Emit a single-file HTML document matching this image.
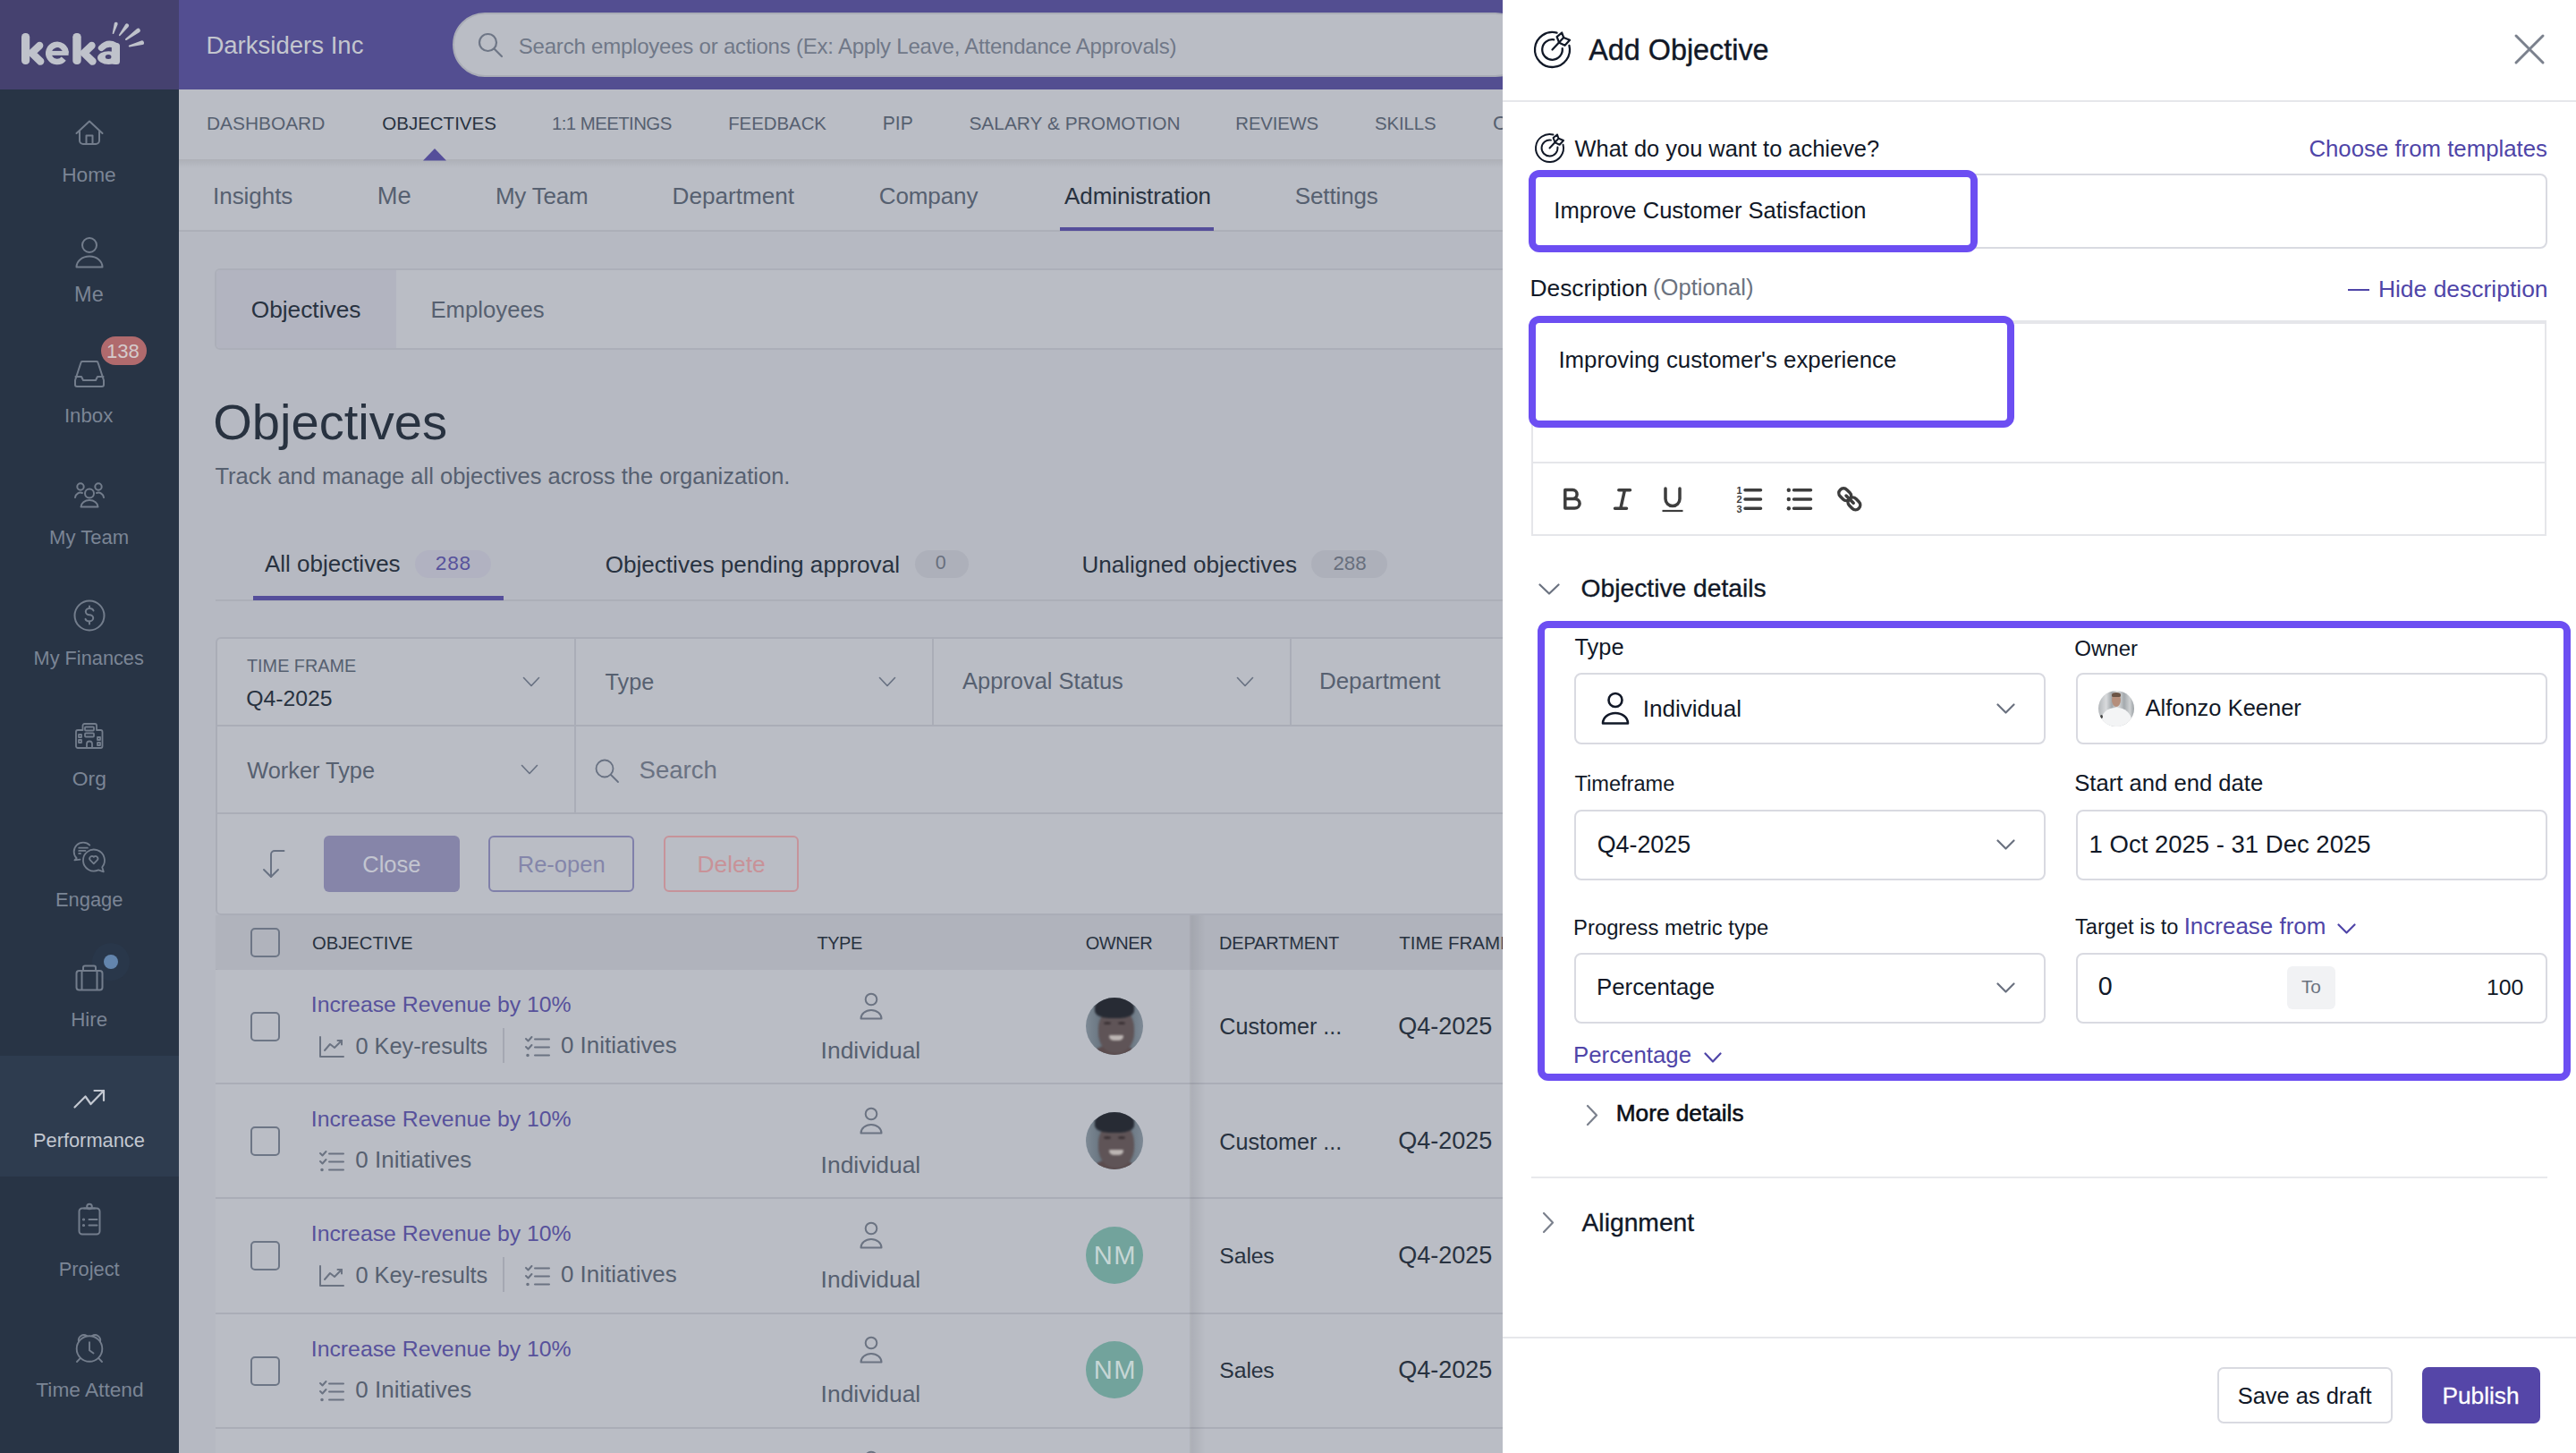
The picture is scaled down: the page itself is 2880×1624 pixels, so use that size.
<!DOCTYPE html>
<html><head><meta charset="utf-8"><title>Add Objective</title>
<style>
html,body{margin:0;padding:0;width:2880px;height:1624px;overflow:hidden;background:#b6b9c2;}
body{position:relative;font-family:'Liberation Sans', sans-serif;}
.a{position:absolute;box-sizing:border-box;}
.t{white-space:pre;}
@media (max-width:2000px){html{zoom:0.5;}}
</style></head><body>
<div class="a" style="left:0.0px;top:0.0px;width:200.0px;height:1624.0px;background:#283445"></div>
<div class="a" style="left:0.0px;top:0.0px;width:200.0px;height:100.0px;background:#45416f"></div>
<div class="a" style="left:200.0px;top:0.0px;width:1480.0px;height:100.0px;background:#534e91"></div>
<div class="a" style="left:200.0px;top:100.0px;width:1480.0px;height:78.0px;background:#babdc5"></div>
<div class="a" style="left:200.0px;top:178.0px;width:1480.0px;height:80.0px;background:#babdc5;"></div>
<div class="a" style="left:200.0px;top:178.0px;width:1480.0px;height:10.0px;background:linear-gradient(rgba(0,0,0,0.07),rgba(0,0,0,0))"></div>
<div class="a" style="left:200.0px;top:257.0px;width:1480.0px;height:2.0px;background:#acafb8"></div>
<svg class="a" style="left:0.0px;top:0.0px;" width="200.0" height="100.0" viewBox="0 0 200 100" fill="none"><g fill="#bfc2cb"><path d="M127.27 37.43 L131.61 27.18 A2.00 2.00 0 0 0 127.79 26.02 L125.73 36.97 A0.80 0.80 0 0 0 127.27 37.43 Z"/><path d="M134.52 39.75 L143.65 29.94 A2.20 2.20 0 0 0 140.15 27.26 L133.08 38.65 A0.90 0.90 0 0 0 134.52 39.75 Z"/><path d="M141.49 44.90 L156.02 35.93 A2.40 2.40 0 0 0 153.18 32.07 L140.31 43.30 A1.00 1.00 0 0 0 141.49 44.90 Z"/><path d="M145.06 52.47 L159.22 50.12 A2.40 2.40 0 0 0 157.98 45.48 L144.54 50.53 A1.00 1.00 0 0 0 145.06 52.47 Z"/>
<rect x="24" y="36.9" width="9.2" height="35.2" rx="4.3"/>
<rect x="81.3" y="36.9" width="9.4" height="35.2" rx="4.3"/>
<rect x="124.8" y="48" width="9.2" height="24.1" rx="3.5"/><path fill-rule="evenodd" d="M109 64.6 a12.5 7.4 0 1 0 25 0 a12.5 7.4 0 1 0 -25 0 Z M117.75 63.4 a3.4 2.5 0 1 0 6.8 0 a3.4 2.5 0 1 0 -6.8 0 Z"/>
</g>
<g stroke="#bfc2cb" fill="none" stroke-linecap="round" stroke-linejoin="round">
<path d="M44.2 51 L35.5 59.3 L45.2 68.6" stroke-width="8.4"/>
<path d="M102.5 51 L93.8 59.3 L103.5 68.6" stroke-width="8.4"/>
<path d="M71.25 65.6 A9.6 9.6 0 1 1 73.5 59.45" stroke-width="6.6" stroke-linecap="butt"/>
<path d="M55.5 59.4 H76.6" stroke-width="5" stroke-linecap="butt"/>
<path d="M113.3 53.6 Q120.5 46.2 129 51" stroke-width="7"/>

</g></svg>
<div class="a t" style="left:230.40px;top:36.68px;font-size:27.55px;line-height:27.55px;letter-spacing:0.000px;color:#c3c6ce;font-weight:400;">Darksiders Inc</div>
<div class="a" style="left:506.0px;top:14.0px;width:1202.0px;height:72.0px;background:#babdc5;border:2px solid #a9acb6;border-radius:36px"></div>
<svg class="a" style="left:533.0px;top:35.0px;" width="32.0" height="32.0" viewBox="0 0 32 32" fill="none"><circle cx="12.5" cy="12.5" r="9.5" stroke="#6e7686" stroke-width="2.2"/><path d="M19.5 19.5 L28 28" stroke="#6e7686" stroke-width="2.2" stroke-linecap="round"/></svg>
<div class="a t" style="left:579.80px;top:39.68px;font-size:24.00px;line-height:24.00px;letter-spacing:-0.214px;color:#707888;font-weight:400;">Search employees or actions (Ex: Apply Leave, Attendance Approvals)</div>
<div class="a t" style="left:230.93px;top:127.61px;font-size:20.90px;line-height:20.90px;letter-spacing:0.000px;color:#566070;font-weight:400;">DASHBOARD</div>
<div class="a t" style="left:427.27px;top:127.94px;font-size:20.51px;line-height:20.51px;letter-spacing:0.000px;color:#283240;font-weight:400;">OBJECTIVES</div>
<div class="a t" style="left:616.97px;top:128.03px;font-size:20.40px;line-height:20.40px;letter-spacing:-0.564px;color:#566070;font-weight:400;">1:1 MEETINGS</div>
<div class="a t" style="left:814.17px;top:128.03px;font-size:20.40px;line-height:20.40px;letter-spacing:-0.017px;color:#566070;font-weight:400;">FEEDBACK</div>
<div class="a t" style="left:986.71px;top:127.40px;font-size:21.15px;line-height:21.15px;letter-spacing:0.000px;color:#566070;font-weight:400;">PIP</div>
<div class="a t" style="left:1083.45px;top:127.60px;font-size:20.90px;line-height:20.90px;letter-spacing:0.000px;color:#566070;font-weight:400;">SALARY &amp; PROMOTION</div>
<div class="a t" style="left:1381.37px;top:128.03px;font-size:20.40px;line-height:20.40px;letter-spacing:-0.199px;color:#566070;font-weight:400;">REVIEWS</div>
<div class="a t" style="left:1536.98px;top:128.03px;font-size:20.40px;line-height:20.40px;letter-spacing:-0.124px;color:#566070;font-weight:400;">SKILLS</div>
<div class="a t" style="left:1668.89px;top:126.53px;font-size:22.17px;line-height:22.17px;letter-spacing:0.000px;color:#566070;font-weight:400;">C</div>
<svg class="a" style="left:472.0px;top:165.0px;" width="28.0" height="15.0" viewBox="0 0 28 15" fill="none"><path d="M14 1 L27 14.5 L1 14.5 Z" fill="#554e9a"/></svg>
<div class="a t" style="left:238.06px;top:206.29px;font-size:26.00px;line-height:26.00px;letter-spacing:-0.046px;color:#566070;font-weight:400;">Insights</div>
<div class="a t" style="left:421.82px;top:205.19px;font-size:27.30px;line-height:27.30px;letter-spacing:0.000px;color:#566070;font-weight:400;">Me</div>
<div class="a t" style="left:553.92px;top:206.29px;font-size:26.00px;line-height:26.00px;letter-spacing:-0.207px;color:#566070;font-weight:400;">My Team</div>
<div class="a t" style="left:751.61px;top:206.20px;font-size:26.11px;line-height:26.11px;letter-spacing:0.000px;color:#566070;font-weight:400;">Department</div>
<div class="a t" style="left:982.70px;top:206.29px;font-size:26.00px;line-height:26.00px;letter-spacing:-0.080px;color:#566070;font-weight:400;">Company</div>
<div class="a t" style="left:1190.00px;top:206.29px;font-size:26.00px;line-height:26.00px;letter-spacing:-0.055px;color:#283240;font-weight:400;">Administration</div>
<div class="a t" style="left:1447.70px;top:206.29px;font-size:26.00px;line-height:26.00px;letter-spacing:-0.111px;color:#566070;font-weight:400;">Settings</div>
<div class="a" style="left:1185.0px;top:254.0px;width:172.0px;height:4.0px;background:#554e9a"></div>
<div class="a" style="left:0.0px;top:1180.0px;width:200.0px;height:135.0px;background:#2e3c4f"></div>
<div class="a t" style="left:69.19px;top:184.30px;font-size:22.68px;line-height:22.68px;letter-spacing:0.000px;color:#7b8595;font-weight:400;">Home</div>
<div class="a t" style="left:83.12px;top:318.43px;font-size:23.48px;line-height:23.48px;letter-spacing:0.017px;color:#7b8595;font-weight:400;">Me</div>
<div class="a t" style="left:71.90px;top:454.15px;font-size:22.26px;line-height:22.26px;letter-spacing:-0.000px;color:#7b8595;font-weight:400;">Inbox</div>
<div class="a t" style="left:55.04px;top:589.73px;font-size:22.06px;line-height:22.06px;letter-spacing:0.000px;color:#7b8595;font-weight:400;">My Team</div>
<div class="a t" style="left:37.56px;top:725.09px;font-size:21.75px;line-height:21.75px;letter-spacing:0.000px;color:#7b8595;font-weight:400;">My Finances</div>
<div class="a t" style="left:80.86px;top:859.07px;font-size:22.84px;line-height:22.84px;letter-spacing:0.000px;color:#7b8595;font-weight:400;">Org</div>
<div class="a t" style="left:61.95px;top:994.96px;font-size:21.90px;line-height:21.90px;letter-spacing:0.000px;color:#7b8595;font-weight:400;">Engage</div>
<div class="a t" style="left:79.22px;top:1129.14px;font-size:22.28px;line-height:22.28px;letter-spacing:0.000px;color:#7b8595;font-weight:400;">Hire</div>
<div class="a t" style="left:36.95px;top:1264.31px;font-size:21.84px;line-height:21.84px;letter-spacing:0.000px;color:#c3c8d1;font-weight:400;">Performance</div>
<div class="a t" style="left:65.65px;top:1407.51px;font-size:21.85px;line-height:21.85px;letter-spacing:0.000px;color:#7b8595;font-weight:400;">Project</div>
<div class="a t" style="left:40.35px;top:1542.30px;font-size:22.69px;line-height:22.69px;letter-spacing:-0.000px;color:#7b8595;font-weight:400;">Time Attend</div>
<div class="a" style="left:103px;top:1054px;width:42px;height:42px;border-radius:50%;background:#29374a"></div>
<svg class="a" style="left:80.0px;top:128.5px;" width="40.0" height="40.0" viewBox="0 0 40 40" fill="none"><g stroke="#737d8c" stroke-width="2" stroke-linecap="round" stroke-linejoin="round"><path d="M5.5 20 L20 6.5 L34.5 20"/><path d="M9 17 V28 a4 4 0 0 0 4 4 H27 a4 4 0 0 0 4 -4 V17"/><path d="M16.5 32 V22.5 H23.5 V32"/></g></svg>
<svg class="a" style="left:80.0px;top:263.3px;" width="40.0" height="40.0" viewBox="0 0 40 40" fill="none"><g stroke="#737d8c" stroke-width="2" stroke-linecap="round" stroke-linejoin="round"><circle cx="20" cy="11" r="8"/><path d="M5.5 35.5 a14.5 12 0 0 1 29 0 Z"/></g></svg>
<svg class="a" style="left:80.0px;top:398.0px;" width="40.0" height="40.0" viewBox="0 0 40 40" fill="none"><g stroke="#737d8c" stroke-width="2" stroke-linecap="round" stroke-linejoin="round"><path d="M12 6 H28 a1.5 1.5 0 0 1 1.5 1.2 L36 27 V32 a2 2 0 0 1 -2 2 H6 a2 2 0 0 1 -2 -2 V27 L10.5 7.2 A1.5 1.5 0 0 1 12 6 Z"/><path d="M4.5 23 H11 L13 27 H27 L29 23 H35.5"/></g></svg>
<svg class="a" style="left:80.0px;top:532.5px;" width="40.0" height="40.0" viewBox="0 0 40 40" fill="none"><g stroke="#737d8c" stroke-width="2" stroke-linecap="round" stroke-linejoin="round"><circle cx="20" cy="18.5" r="5"/><circle cx="10" cy="11" r="3.7"/><circle cx="30" cy="11" r="3.7"/><path d="M10.5 33.5 a9.5 7.5 0 0 1 19 0 Z"/><path d="M4 23 a6 6 0 0 1 8 -5"/><path d="M36 23 a6 6 0 0 0 -8 -5"/></g></svg>
<svg class="a" style="left:80.0px;top:667.9px;" width="40.0" height="40.0" viewBox="0 0 40 40" fill="none"><g stroke="#737d8c" stroke-width="2" stroke-linecap="round" stroke-linejoin="round"><circle cx="20" cy="20" r="16.5"/><path d="M24.5 14.5 a4.5 3.5 0 0 0 -4.5 -2.5 a4.2 3.6 0 0 0 0 7.2 a4.2 3.6 0 0 1 0 7.2 a4.5 3.5 0 0 1 -4.5 -2.5"/><path d="M20 9.5 V12 M20 26.5 V29.5"/></g></svg>
<svg class="a" style="left:80.0px;top:803.0px;" width="40.0" height="40.0" viewBox="0 0 40 40" fill="none"><g stroke="#737d8c" stroke-width="1.8" stroke-linecap="round" stroke-linejoin="round"><path d="M12.5 13 V8 a2 2 0 0 1 2 -2 H26 a2 2 0 0 1 2 2 V13 H32.5 a2 2 0 0 1 2 2 V31 a2 2 0 0 1 -2 2 H7 a2 2 0 0 1 -2 -2 V15 a2 2 0 0 1 2 -2 Z"/><rect x="15" y="9.5" width="10" height="4" rx="1"/><rect x="15" y="16.5" width="10" height="4" rx="1"/><rect x="8" y="18" width="3" height="3"/><rect x="8" y="24" width="3" height="3"/><rect x="29" y="21" width="3" height="3"/><rect x="29" y="27" width="3" height="3"/><path d="M17 33 V28.5 a3 3 0 0 1 6 0 V33"/></g></svg>
<svg class="a" style="left:80.0px;top:937.8px;" width="40.0" height="40.0" viewBox="0 0 40 40" fill="none"><g stroke="#737d8c" stroke-width="1.8" stroke-linecap="round" stroke-linejoin="round"><path d="M20.3 6.6 A10.3 10.3 0 1 0 5.7 21.2 L3.4 23.4 L9.5 22.6"/><path d="M8.2 9.7 H17.9 M8.2 12.9 H15.5 M8.2 15.9 H10"/><path d="M30.1 34.4 A12 12 0 1 1 34.2 31.2 L35.8 36.3 Z"/><path d="M24.8 27.3 L20.9 23.4 a2.6 2.6 0 0 1 3.9 -3.5 a2.6 2.6 0 0 1 3.9 3.5 Z"/></g></svg>
<svg class="a" style="left:80.0px;top:1073.0px;" width="40.0" height="40.0" viewBox="0 0 40 40" fill="none"><g stroke="#737d8c" stroke-width="2" stroke-linecap="round" stroke-linejoin="round"><rect x="5.5" y="12" width="29" height="21.5" rx="3"/><path d="M13 12 V8.5 a2 2 0 0 1 2 -2 H25 a2 2 0 0 1 2 2 V12"/><path d="M11.5 12.5 V33 M28.5 12.5 V33"/></g></svg>
<svg class="a" style="left:80.0px;top:1208.0px;" width="40.0" height="40.0" viewBox="0 0 40 40" fill="none"><g stroke="#c3c8d1" stroke-width="2.2" stroke-linecap="round" stroke-linejoin="round"><path d="M3.5 29.5 L15.5 17.5 L21.5 26 L36 11"/><path d="M25.5 11 H36 V22"/></g></svg>
<svg class="a" style="left:80.0px;top:1343.0px;" width="40.0" height="40.0" viewBox="0 0 40 40" fill="none"><g stroke="#737d8c" stroke-width="2" stroke-linecap="round" stroke-linejoin="round"><rect x="8.5" y="7.5" width="23" height="29" rx="3.5"/><path d="M14 7.5 H26"/><circle cx="20" cy="5.5" r="2.8"/><path d="M19.5 20 H28.5 M19.5 26.5 H28.5"/><circle cx="13.5" cy="20" r="0.6" fill="#737d8c"/><circle cx="13.5" cy="26.5" r="0.6" fill="#737d8c"/></g></svg>
<svg class="a" style="left:80.0px;top:1487.0px;" width="40.0" height="40.0" viewBox="0 0 40 40" fill="none"><g stroke="#737d8c" stroke-width="1.9" stroke-linecap="round" stroke-linejoin="round"><circle cx="20" cy="20.5" r="14.3"/><path d="M20 13.2 V22.2 L24.5 25.4"/><path d="M8 12.5 a6 6 0 0 1 9 -6.5"/><path d="M32 12.5 a6 6 0 0 0 -9 -6.5"/><path d="M9.7 31.2 L6 35 M30.3 31.2 L34 35"/></g></svg>
<div class="a" style="left:113.0px;top:376.0px;width:51.0px;height:32.0px;background:#b06a6d;border-radius:16px"></div>
<div class="a t" style="left:118.93px;top:381.71px;font-size:22.08px;line-height:22.08px;letter-spacing:0.000px;color:#d4cacb;font-weight:400;">138</div>
<div class="a" style="left:116.0px;top:1067.0px;width:16.0px;height:16.0px;background:#6385ad;border-radius:50%"></div>
<div class="a" style="left:240.0px;top:300.0px;width:1500.0px;height:91.0px;background:#babdc5;border:2px solid #acafb9;border-radius:6px"></div>
<div class="a" style="left:242.0px;top:302.0px;width:201.0px;height:87.0px;background:#b2b4c0;border-radius:4px 0 0 4px"></div>
<div class="a t" style="left:280.68px;top:333.33px;font-size:26.31px;line-height:26.31px;letter-spacing:0.000px;color:#283240;font-weight:400;">Objectives</div>
<div class="a t" style="left:481.44px;top:333.82px;font-size:25.73px;line-height:25.73px;letter-spacing:-0.000px;color:#566070;font-weight:400;">Employees</div>
<div class="a t" style="left:238.19px;top:444.20px;font-size:56.11px;line-height:56.11px;letter-spacing:0.000px;color:#283240;font-weight:400;">Objectives</div>
<div class="a t" style="left:240.49px;top:520.09px;font-size:25.53px;line-height:25.53px;letter-spacing:0.000px;color:#566070;font-weight:400;">Track and manage all objectives across the organization.</div>
<div class="a" style="left:241.0px;top:670.0px;width:1439.0px;height:2.0px;background:#acafb8"></div>
<div class="a" style="left:282.6px;top:666.0px;width:280.0px;height:4.5px;background:#554e9a"></div>
<div class="a t" style="left:296.00px;top:617.62px;font-size:25.97px;line-height:25.97px;letter-spacing:0.000px;color:#283240;font-weight:400;">All objectives</div>
<div class="a" style="left:464.0px;top:615.0px;width:85.0px;height:31.0px;background:#b1b2c1;border-radius:16px"></div>
<div class="a t" style="left:486.87px;top:618.29px;font-size:22.70px;line-height:22.70px;letter-spacing:0.684px;color:#57529c;font-weight:400;">288</div>
<div class="a t" style="left:676.70px;top:617.51px;font-size:26.10px;line-height:26.10px;letter-spacing:0.000px;color:#283240;font-weight:400;">Objectives pending approval</div>
<div class="a" style="left:1022.7px;top:615.0px;width:60.0px;height:31.0px;background:#adb0ba;border-radius:16px"></div>
<div class="a t" style="left:1045.64px;top:619.34px;font-size:21.46px;line-height:21.46px;letter-spacing:0.000px;color:#686f7d;font-weight:400;">0</div>
<div class="a t" style="left:1209.41px;top:617.53px;font-size:26.07px;line-height:26.07px;letter-spacing:0.000px;color:#283240;font-weight:400;">Unaligned objectives</div>
<div class="a" style="left:1466.0px;top:615.0px;width:85.0px;height:31.0px;background:#adb0ba;border-radius:16px"></div>
<div class="a t" style="left:1490.38px;top:618.58px;font-size:22.36px;line-height:22.36px;letter-spacing:0.000px;color:#686f7d;font-weight:400;">288</div>
<div class="a" style="left:241.0px;top:712.0px;width:1500.0px;height:311.0px;background:#babdc5;border:2px solid #aaadb7;border-radius:6px"></div>
<div class="a" style="left:242.0px;top:810.0px;width:1438.0px;height:2.0px;background:#aaadb7"></div>
<div class="a" style="left:242.0px;top:908.0px;width:1438.0px;height:2.0px;background:#aaadb7"></div>
<div class="a" style="left:641.8px;top:713.0px;width:2.0px;height:98.0px;background:#aaadb7"></div>
<div class="a" style="left:1041.5px;top:713.0px;width:2.0px;height:98.0px;background:#aaadb7"></div>
<div class="a" style="left:1441.8px;top:713.0px;width:2.0px;height:98.0px;background:#aaadb7"></div>
<div class="a" style="left:641.8px;top:811.0px;width:2.0px;height:98.0px;background:#aaadb7"></div>
<div class="a t" style="left:276.00px;top:735.21px;font-size:19.84px;line-height:19.84px;letter-spacing:-0.000px;color:#566070;font-weight:400;">TIME FRAME</div>
<div class="a t" style="left:275.16px;top:769.02px;font-size:24.79px;line-height:24.79px;letter-spacing:0.000px;color:#283240;font-weight:400;">Q4-2025</div>
<svg class="a" style="left:584.0px;top:756.0px;" width="20.0" height="12.0" viewBox="-1 -1 20 12" fill="none"><path d="M0.5 0.5 L9.0 9.5 L17.5 0.5" stroke="#687182" stroke-width="1.6" stroke-linecap="round" stroke-linejoin="round"/></svg>
<div class="a t" style="left:676.50px;top:749.64px;font-size:25.24px;line-height:25.24px;letter-spacing:0.000px;color:#566070;font-weight:400;">Type</div>
<svg class="a" style="left:982.0px;top:756.0px;" width="20.0" height="12.0" viewBox="-1 -1 20 12" fill="none"><path d="M0.5 0.5 L9.0 9.5 L17.5 0.5" stroke="#687182" stroke-width="1.6" stroke-linecap="round" stroke-linejoin="round"/></svg>
<div class="a t" style="left:1076.00px;top:749.44px;font-size:25.47px;line-height:25.47px;letter-spacing:0.000px;color:#566070;font-weight:400;">Approval Status</div>
<svg class="a" style="left:1382.0px;top:756.0px;" width="20.0" height="12.0" viewBox="-1 -1 20 12" fill="none"><path d="M0.5 0.5 L9.0 9.5 L17.5 0.5" stroke="#687182" stroke-width="1.6" stroke-linecap="round" stroke-linejoin="round"/></svg>
<div class="a t" style="left:1474.92px;top:749.01px;font-size:25.97px;line-height:25.97px;letter-spacing:-0.000px;color:#566070;font-weight:400;">Department</div>
<div class="a t" style="left:276.15px;top:848.52px;font-size:25.38px;line-height:25.38px;letter-spacing:0.000px;color:#566070;font-weight:400;">Worker Type</div>
<svg class="a" style="left:582.0px;top:854.0px;" width="20.0" height="12.0" viewBox="-1 -1 20 12" fill="none"><path d="M0.5 0.5 L9.0 9.5 L17.5 0.5" stroke="#687182" stroke-width="1.6" stroke-linecap="round" stroke-linejoin="round"/></svg>
<svg class="a" style="left:664.0px;top:847.0px;" width="30.0" height="30.0" viewBox="0 0 30 30" fill="none"><circle cx="12" cy="12" r="9.5" stroke="#687182" stroke-width="1.8"/><path d="M19 19 L27 27" stroke="#687182" stroke-width="1.8" stroke-linecap="round"/></svg>
<div class="a t" style="left:714.62px;top:846.69px;font-size:27.54px;line-height:27.54px;letter-spacing:0.000px;color:#6a7282;font-weight:400;">Search</div>
<svg class="a" style="left:290.0px;top:945.0px;" width="32.0" height="40.0" viewBox="0 0 32 40" fill="none"><path d="M13 35 V10 a4 4 0 0 1 4 -4 H27.5" stroke="#687182" stroke-width="1.9" fill="none" stroke-linecap="round" stroke-linejoin="round"/><path d="M5 27 L13 35 L21 27" stroke="#687182" stroke-width="1.9" fill="none" stroke-linecap="round" stroke-linejoin="round"/></svg>
<div class="a" style="left:362.0px;top:934.0px;width:152.0px;height:63.0px;background:#8685a9;border-radius:6px"></div>
<div class="a t" style="left:405.22px;top:953.79px;font-size:25.53px;line-height:25.53px;letter-spacing:0.000px;color:#c3c5d0;font-weight:400;">Close</div>
<div class="a" style="left:546.0px;top:934.0px;width:163.0px;height:63.0px;border:2px solid #8080aa;border-radius:6px"></div>
<div class="a t" style="left:578.76px;top:953.79px;font-size:25.53px;line-height:25.53px;letter-spacing:-0.000px;color:#8486aa;font-weight:400;">Re-open</div>
<div class="a" style="left:742.0px;top:934.0px;width:151.0px;height:63.0px;border:2px solid #c6939a;border-radius:6px"></div>
<div class="a t" style="left:779.49px;top:953.06px;font-size:26.39px;line-height:26.39px;letter-spacing:0.000px;color:#c89298;font-weight:400;">Delete</div>
<div class="a" style="left:241.0px;top:1023.0px;width:1439.0px;height:61.0px;background:#b0b3bc"></div>
<div class="a" style="left:241.0px;top:1083.0px;width:2.0px;height:600.0px;background:#aaadb7"></div>
<div class="a" style="left:279.5px;top:1036.5px;width:33.0px;height:33.0px;border:2.5px solid #6d7686;border-radius:5px"></div>
<div class="a t" style="left:348.99px;top:1043.85px;font-size:20.26px;line-height:20.26px;letter-spacing:0.000px;color:#283240;font-weight:400;">OBJECTIVE</div>
<div class="a t" style="left:913.60px;top:1044.07px;font-size:20.00px;line-height:20.00px;letter-spacing:-0.533px;color:#283240;font-weight:400;">TYPE</div>
<div class="a t" style="left:1213.70px;top:1044.07px;font-size:20.00px;line-height:20.00px;letter-spacing:-0.400px;color:#283240;font-weight:400;">OWNER</div>
<div class="a t" style="left:1363.00px;top:1044.07px;font-size:20.00px;line-height:20.00px;letter-spacing:-0.178px;color:#283240;font-weight:400;">DEPARTMENT</div>
<div class="a t" style="left:1564.19px;top:1043.60px;font-size:20.56px;line-height:20.56px;letter-spacing:0.000px;color:#283240;font-weight:400;">TIME FRAME</div>
<div class="a" style="left:241.0px;top:1084.0px;width:1439.0px;height:128.2px;background:#babdc5;border-bottom:2px solid #aaadb7"></div>
<div class="a" style="left:241.0px;top:1212.2px;width:1439.0px;height:128.2px;background:#babdc5;border-bottom:2px solid #aaadb7"></div>
<div class="a" style="left:241.0px;top:1340.4px;width:1439.0px;height:128.2px;background:#babdc5;border-bottom:2px solid #aaadb7"></div>
<div class="a" style="left:241.0px;top:1468.6px;width:1439.0px;height:128.2px;background:#babdc5;border-bottom:2px solid #aaadb7"></div>
<div class="a" style="left:241.0px;top:1596.8px;width:1439.0px;height:128.2px;background:#babdc5;border-bottom:2px solid #aaadb7"></div>
<div class="a" style="left:279.5px;top:1131.0px;width:33.0px;height:33.0px;border:2.5px solid #6d7686;border-radius:5px"></div>
<div class="a t" style="left:347.77px;top:1111.01px;font-size:24.80px;line-height:24.80px;letter-spacing:0.000px;color:#57519b;font-weight:400;">Increase Revenue by 10%</div>
<svg class="a" style="left:355.5px;top:1157.0px;" width="30.0" height="26.0" viewBox="0 0 30 26" fill="none"><g stroke="#6b7382" stroke-width="2" fill="none" stroke-linecap="round" stroke-linejoin="round"><path d="M2 2 V24 H28"/><path d="M7 17 L13 10 L18 14 L26 6"/><path d="M21.5 6 H26 V10.5"/></g></svg>
<div class="a t" style="left:397.39px;top:1156.54px;font-size:25.35px;line-height:25.35px;letter-spacing:0.000px;color:#566070;font-weight:400;">0 Key-results</div>
<div class="a" style="left:561.8px;top:1149.0px;width:2.0px;height:39.0px;background:#a5a8b2"></div>
<svg class="a" style="left:585.5px;top:1157.0px;" width="30.0" height="26.0" viewBox="0 0 30 26" fill="none"><g stroke="#6b7382" stroke-width="2" fill="none" stroke-linecap="round" stroke-linejoin="round"><path d="M2 4 L4.5 6.5 L8.5 2"/><path d="M2 13 L4.5 15.5 L8.5 11"/><circle cx="4" cy="22.5" r="0.8" fill="#6b7382"/><path d="M12 4.5 H28 M12 13.5 H28 M12 22.5 H28"/></g></svg>
<div class="a t" style="left:626.96px;top:1156.02px;font-size:25.96px;line-height:25.96px;letter-spacing:0.000px;color:#566070;font-weight:400;">0 Initiatives</div>
<svg class="a" style="left:958.8px;top:1107.5px;" width="30.0" height="34.0" viewBox="0 0 30 34" fill="none"><g stroke="#6b7382" stroke-width="2" fill="none"><circle cx="15" cy="9" r="6.3"/><path d="M3.5 30.5 a11.5 9.5 0 0 1 23 0 Z" stroke-linejoin="round"/></g></svg>
<div class="a t" style="left:917.62px;top:1160.64px;font-size:26.41px;line-height:26.41px;letter-spacing:0.000px;color:#566070;font-weight:400;">Individual</div>
<div class="a" style="left:1214px;top:1114.8px;width:64px;height:64px;border-radius:50%;overflow:hidden;background:linear-gradient(90deg,#7d8995,#64707b 32%,#64707b 68%,#7d8995)"><div class="a" style="left:0;top:0;width:64px;height:64px;filter:blur(1.2px)"><div class="a" style="left:6px;top:52px;width:52px;height:30px;border-radius:50%;background:#5b4c4e"></div><div class="a" style="left:14px;top:12px;width:40px;height:50px;border-radius:45%;background:#5f5457"></div><div class="a" style="left:10px;top:-1px;width:44px;height:24px;border-radius:50% 50% 35% 35%;background:#272b34"></div><div class="a" style="left:20px;top:27px;width:8px;height:3px;border-radius:50%;background:#3a3134"></div><div class="a" style="left:36px;top:27px;width:8px;height:3px;border-radius:50%;background:#3a3134"></div><div class="a" style="left:26px;top:42px;width:16px;height:6px;border-radius:2px 2px 8px 8px;background:#bcb5b3"></div></div></div>
<div class="a t" style="left:1363.34px;top:1135.39px;font-size:25.17px;line-height:25.17px;letter-spacing:0.000px;color:#283240;font-weight:400;">Customer ...</div>
<div class="a t" style="left:1563.25px;top:1133.82px;font-size:27.03px;line-height:27.03px;letter-spacing:-0.000px;color:#283240;font-weight:400;">Q4-2025</div>
<div class="a" style="left:279.5px;top:1259.2px;width:33.0px;height:33.0px;border:2.5px solid #6d7686;border-radius:5px"></div>
<div class="a t" style="left:347.77px;top:1239.21px;font-size:24.80px;line-height:24.80px;letter-spacing:0.000px;color:#57519b;font-weight:400;">Increase Revenue by 10%</div>
<svg class="a" style="left:355.5px;top:1285.2px;" width="30.0" height="26.0" viewBox="0 0 30 26" fill="none"><g stroke="#6b7382" stroke-width="2" fill="none" stroke-linecap="round" stroke-linejoin="round"><path d="M2 4 L4.5 6.5 L8.5 2"/><path d="M2 13 L4.5 15.5 L8.5 11"/><circle cx="4" cy="22.5" r="0.8" fill="#6b7382"/><path d="M12 4.5 H28 M12 13.5 H28 M12 22.5 H28"/></g></svg>
<div class="a t" style="left:397.36px;top:1284.22px;font-size:25.96px;line-height:25.96px;letter-spacing:0.000px;color:#566070;font-weight:400;">0 Initiatives</div>
<svg class="a" style="left:958.8px;top:1235.7px;" width="30.0" height="34.0" viewBox="0 0 30 34" fill="none"><g stroke="#6b7382" stroke-width="2" fill="none"><circle cx="15" cy="9" r="6.3"/><path d="M3.5 30.5 a11.5 9.5 0 0 1 23 0 Z" stroke-linejoin="round"/></g></svg>
<div class="a t" style="left:917.62px;top:1288.84px;font-size:26.41px;line-height:26.41px;letter-spacing:0.000px;color:#566070;font-weight:400;">Individual</div>
<div class="a" style="left:1214px;top:1243.0px;width:64px;height:64px;border-radius:50%;overflow:hidden;background:linear-gradient(90deg,#7d8995,#64707b 32%,#64707b 68%,#7d8995)"><div class="a" style="left:0;top:0;width:64px;height:64px;filter:blur(1.2px)"><div class="a" style="left:6px;top:52px;width:52px;height:30px;border-radius:50%;background:#5b4c4e"></div><div class="a" style="left:14px;top:12px;width:40px;height:50px;border-radius:45%;background:#5f5457"></div><div class="a" style="left:10px;top:-1px;width:44px;height:24px;border-radius:50% 50% 35% 35%;background:#272b34"></div><div class="a" style="left:20px;top:27px;width:8px;height:3px;border-radius:50%;background:#3a3134"></div><div class="a" style="left:36px;top:27px;width:8px;height:3px;border-radius:50%;background:#3a3134"></div><div class="a" style="left:26px;top:42px;width:16px;height:6px;border-radius:2px 2px 8px 8px;background:#bcb5b3"></div></div></div>
<div class="a t" style="left:1363.34px;top:1263.59px;font-size:25.17px;line-height:25.17px;letter-spacing:0.000px;color:#283240;font-weight:400;">Customer ...</div>
<div class="a t" style="left:1563.25px;top:1262.02px;font-size:27.03px;line-height:27.03px;letter-spacing:-0.000px;color:#283240;font-weight:400;">Q4-2025</div>
<div class="a" style="left:279.5px;top:1387.4px;width:33.0px;height:33.0px;border:2.5px solid #6d7686;border-radius:5px"></div>
<div class="a t" style="left:347.77px;top:1367.41px;font-size:24.80px;line-height:24.80px;letter-spacing:0.000px;color:#57519b;font-weight:400;">Increase Revenue by 10%</div>
<svg class="a" style="left:355.5px;top:1413.4px;" width="30.0" height="26.0" viewBox="0 0 30 26" fill="none"><g stroke="#6b7382" stroke-width="2" fill="none" stroke-linecap="round" stroke-linejoin="round"><path d="M2 2 V24 H28"/><path d="M7 17 L13 10 L18 14 L26 6"/><path d="M21.5 6 H26 V10.5"/></g></svg>
<div class="a t" style="left:397.39px;top:1412.94px;font-size:25.35px;line-height:25.35px;letter-spacing:0.000px;color:#566070;font-weight:400;">0 Key-results</div>
<div class="a" style="left:561.8px;top:1405.4px;width:2.0px;height:39.0px;background:#a5a8b2"></div>
<svg class="a" style="left:585.5px;top:1413.4px;" width="30.0" height="26.0" viewBox="0 0 30 26" fill="none"><g stroke="#6b7382" stroke-width="2" fill="none" stroke-linecap="round" stroke-linejoin="round"><path d="M2 4 L4.5 6.5 L8.5 2"/><path d="M2 13 L4.5 15.5 L8.5 11"/><circle cx="4" cy="22.5" r="0.8" fill="#6b7382"/><path d="M12 4.5 H28 M12 13.5 H28 M12 22.5 H28"/></g></svg>
<div class="a t" style="left:626.96px;top:1412.42px;font-size:25.96px;line-height:25.96px;letter-spacing:0.000px;color:#566070;font-weight:400;">0 Initiatives</div>
<svg class="a" style="left:958.8px;top:1363.9px;" width="30.0" height="34.0" viewBox="0 0 30 34" fill="none"><g stroke="#6b7382" stroke-width="2" fill="none"><circle cx="15" cy="9" r="6.3"/><path d="M3.5 30.5 a11.5 9.5 0 0 1 23 0 Z" stroke-linejoin="round"/></g></svg>
<div class="a t" style="left:917.62px;top:1417.04px;font-size:26.41px;line-height:26.41px;letter-spacing:0.000px;color:#566070;font-weight:400;">Individual</div>
<div class="a" style="left:1214.0px;top:1371.2px;width:64.0px;height:64.0px;background:#72a39c;border-radius:50%"></div>
<div class="a t" style="left:1222.67px;top:1388.76px;font-size:29.11px;line-height:29.11px;letter-spacing:1.533px;color:#c6d6d5;font-weight:400;">NM</div>
<div class="a t" style="left:1363.36px;top:1392.11px;font-size:24.80px;line-height:24.80px;letter-spacing:-0.154px;color:#283240;font-weight:400;">Sales</div>
<div class="a t" style="left:1563.25px;top:1390.22px;font-size:27.03px;line-height:27.03px;letter-spacing:-0.000px;color:#283240;font-weight:400;">Q4-2025</div>
<div class="a" style="left:279.5px;top:1515.6px;width:33.0px;height:33.0px;border:2.5px solid #6d7686;border-radius:5px"></div>
<div class="a t" style="left:347.77px;top:1495.61px;font-size:24.80px;line-height:24.80px;letter-spacing:0.000px;color:#57519b;font-weight:400;">Increase Revenue by 10%</div>
<svg class="a" style="left:355.5px;top:1541.6px;" width="30.0" height="26.0" viewBox="0 0 30 26" fill="none"><g stroke="#6b7382" stroke-width="2" fill="none" stroke-linecap="round" stroke-linejoin="round"><path d="M2 4 L4.5 6.5 L8.5 2"/><path d="M2 13 L4.5 15.5 L8.5 11"/><circle cx="4" cy="22.5" r="0.8" fill="#6b7382"/><path d="M12 4.5 H28 M12 13.5 H28 M12 22.5 H28"/></g></svg>
<div class="a t" style="left:397.36px;top:1540.62px;font-size:25.96px;line-height:25.96px;letter-spacing:0.000px;color:#566070;font-weight:400;">0 Initiatives</div>
<svg class="a" style="left:958.8px;top:1492.1px;" width="30.0" height="34.0" viewBox="0 0 30 34" fill="none"><g stroke="#6b7382" stroke-width="2" fill="none"><circle cx="15" cy="9" r="6.3"/><path d="M3.5 30.5 a11.5 9.5 0 0 1 23 0 Z" stroke-linejoin="round"/></g></svg>
<div class="a t" style="left:917.62px;top:1545.24px;font-size:26.41px;line-height:26.41px;letter-spacing:0.000px;color:#566070;font-weight:400;">Individual</div>
<div class="a" style="left:1214.0px;top:1499.4px;width:64.0px;height:64.0px;background:#72a39c;border-radius:50%"></div>
<div class="a t" style="left:1222.67px;top:1516.96px;font-size:29.11px;line-height:29.11px;letter-spacing:1.533px;color:#c6d6d5;font-weight:400;">NM</div>
<div class="a t" style="left:1363.36px;top:1520.31px;font-size:24.80px;line-height:24.80px;letter-spacing:-0.154px;color:#283240;font-weight:400;">Sales</div>
<div class="a t" style="left:1563.25px;top:1518.42px;font-size:27.03px;line-height:27.03px;letter-spacing:-0.000px;color:#283240;font-weight:400;">Q4-2025</div>
<svg class="a" style="left:958.8px;top:1620.3px;" width="30.0" height="34.0" viewBox="0 0 30 34" fill="none"><g stroke="#6b7382" stroke-width="2" fill="none"><circle cx="15" cy="9" r="6.3"/><path d="M3.5 30.5 a11.5 9.5 0 0 1 23 0 Z" stroke-linejoin="round"/></g></svg>
<div class="a" style="left:1330.0px;top:1023.0px;width:1.5px;height:601.0px;background:rgba(0,0,0,0.05)"></div>
<div class="a" style="left:1331.5px;top:1023.0px;width:16.0px;height:601.0px;background:linear-gradient(90deg,rgba(0,0,0,0.075),rgba(0,0,0,0))"></div>
<div class="a" style="left:1680.0px;top:0.0px;width:1200.0px;height:1624.0px;background:#ffffff"></div>
<div class="a" style="left:1680.0px;top:112.0px;width:1200.0px;height:2.0px;background:#e6e7eb"></div>
<svg class="a" style="left:1712.4px;top:32.4px;" width="47.0" height="47.0" viewBox="1712.40 32.40 47.00 47.00" fill="none"><g stroke="#111827" stroke-width="2.26" fill="none" stroke-linecap="round" stroke-linejoin="round"><path d="M1754.82 51.18 A19.50 19.50 0 1 1 1740.95 37.06"/><path d="M1747.11 54.52 A11.29 11.29 0 1 1 1737.67 44.75"/><path d="M1735.90 55.90 L1748.52 42.35"/><path d="M1743.60 48.20 1741.03 41.53 1746.57 36.91 1748.52 42.35 1755.40 45.23 1749.96 51.18 Z"/></g></svg>
<div class="a t" style="left:1776.30px;top:40.12px;font-size:32.34px;line-height:32.34px;letter-spacing:0.000px;color:#111827;font-weight:400;-webkit-text-stroke:0.39px #111827;">Add Objective</div>
<svg class="a" style="left:2808.0px;top:35.0px;" width="40.0" height="40.0" viewBox="0 0 40 40" fill="none"><path d="M5 5 L35 35 M35 5 L5 35" stroke="#7b818d" stroke-width="3" stroke-linecap="round"/></svg>
<svg class="a" style="left:1712.5px;top:146.0px;" width="39.0" height="39.0" viewBox="1712.50 146.00 39.00 39.00" fill="none"><g stroke="#111827" stroke-width="1.96" fill="none" stroke-linecap="round" stroke-linejoin="round"><path d="M1747.04 161.75 A15.50 15.50 0 1 1 1736.01 150.53"/><path d="M1740.91 164.41 A8.97 8.97 0 1 1 1733.40 156.64"/><path d="M1732.00 165.50 L1742.03 154.73"/><path d="M1738.12 159.38 1736.08 154.08 1740.48 150.41 1742.03 154.73 1747.50 157.02 1743.18 161.75 Z"/></g></svg>
<div class="a t" style="left:1760.55px;top:153.87px;font-size:25.43px;line-height:25.43px;letter-spacing:0.000px;color:#111827;font-weight:400;">What do you want to achieve?</div>
<div class="a t" style="left:2581.41px;top:153.57px;font-size:25.79px;line-height:25.79px;letter-spacing:0.000px;color:#4f45a8;font-weight:400;">Choose from templates</div>
<div class="a" style="left:1712.0px;top:194.0px;width:1135.5px;height:84.0px;border:2px solid #d9dae1;border-radius:8px"></div>
<div class="a" style="left:1709.0px;top:190.0px;width:502.0px;height:92.0px;background:#fff;border:8.5px solid #6c4ef2;border-radius:12px"></div>
<div class="a t" style="left:1737.30px;top:223.36px;font-size:25.56px;line-height:25.56px;letter-spacing:0.000px;color:#111827;font-weight:400;">Improve Customer Satisfaction</div>
<div class="a t" style="left:1710.59px;top:308.72px;font-size:26.32px;line-height:26.32px;letter-spacing:-0.000px;color:#111827;font-weight:400;">Description</div>
<div class="a t" style="left:1848.06px;top:309.31px;font-size:25.62px;line-height:25.62px;letter-spacing:-0.000px;color:#6b7280;font-weight:400;">(Optional)</div>
<div class="a" style="left:2625.0px;top:322.5px;width:24.0px;height:2.5px;background:#4f45a8"></div>
<div class="a t" style="left:2658.88px;top:309.60px;font-size:26.46px;line-height:26.46px;letter-spacing:0.000px;color:#4f45a8;font-weight:400;">Hide description</div>
<div class="a" style="left:1712.0px;top:358.0px;width:1135.0px;height:241.0px;border:2px solid #e5e6ea;border-top-width:4px"></div>
<div class="a" style="left:1712.0px;top:515.7px;width:1135.0px;height:2.0px;background:#e5e6ea"></div>
<div class="a" style="left:1709.0px;top:352.5px;width:542.5px;height:125.5px;background:#fff;border:8.5px solid #6c4ef2;border-radius:12px"></div>
<div class="a t" style="left:1742.38px;top:390.15px;font-size:25.82px;line-height:25.82px;letter-spacing:0.000px;color:#111827;font-weight:400;">Improving customer&#x27;s experience</div>
<svg class="a" style="left:1740.0px;top:536.0px;" width="350.0" height="42.0" viewBox="1740 536 350 42" fill="none"><g stroke="#3d3d3d" stroke-width="3.5" fill="none" stroke-linecap="round" stroke-linejoin="round">
<path d="M1749.8 547.6 V568 H1760.5 a5.6 5.3 0 0 0 0 -10.6 H1749.8 M1749.8 557.4 H1758.2 a4.9 4.9 0 0 0 0 -9.8 H1749.8"/>
<path d="M1809.8 547.8 H1822.5 M1805.5 568.2 H1818.5 M1816.3 548.4 L1812 567.6"/>
<path d="M1862 546 V557.5 a8 8 0 0 0 16 0 V546"/>
<path d="M1951 547.8 H1968.5 M1951 558 H1968.5 M1951 568.2 H1968.5"/>
<path d="M2005.5 547.8 H2024.5 M2005.5 558 H2024.5 M2005.5 568.2 H2024.5"/>
<g transform="rotate(45 2062.7 552.7)"><rect x="2055.2" y="547.45" width="15" height="10.5" rx="5.25"/></g>
<g transform="rotate(45 2072.9 562.9)"><rect x="2065.4" y="557.65" width="15" height="10.5" rx="5.25"/></g>
<path d="M2064 554 L2072.2 562.2"/>
</g>
<path d="M1858.5 571 H1881.5" stroke="#3d3d3d" stroke-width="2.2"/>
<g fill="#3d3d3d"><circle cx="1999.8" cy="547.8" r="2.2"/><circle cx="1999.8" cy="558" r="2.2"/><circle cx="1999.8" cy="568.2" r="2.2"/></g>
<g fill="#3d3d3d" font-family="Liberation Sans" font-weight="700" font-size="11"><text x="1941.5" y="552">1</text><text x="1941.5" y="562.3">2</text><text x="1941.5" y="572.6">3</text></g></svg>
<svg class="a" style="left:1720.0px;top:652.0px;" width="24.0" height="13.0" viewBox="-1 -1 24 13" fill="none"><path d="M0.5 0.5 L11.0 10.5 L21.5 0.5" stroke="#6b7280" stroke-width="2.2" stroke-linecap="round" stroke-linejoin="round"/></svg>
<div class="a t" style="left:1767.57px;top:642.50px;font-size:28.24px;line-height:28.24px;letter-spacing:0.000px;color:#111827;font-weight:400;-webkit-text-stroke:0.34px #111827;">Objective details</div>
<div class="a" style="left:1719.3px;top:694.0px;width:1154.9px;height:513.8px;border:8.5px solid #6c4ef2;border-radius:12px"></div>
<div class="a t" style="left:1760.49px;top:711.47px;font-size:25.43px;line-height:25.43px;letter-spacing:0.000px;color:#111827;font-weight:400;">Type</div>
<div class="a" style="left:1760.2px;top:752.0px;width:526.8px;height:79.5px;border:2px solid #d9dae1;border-radius:8px"></div>
<svg class="a" style="left:1789.0px;top:773.0px;" width="34.0" height="38.0" viewBox="0 0 34 38" fill="none"><g stroke="#111827" stroke-width="2.6" fill="none" stroke-linejoin="round"><circle cx="17" cy="9.5" r="7.5"/><path d="M3 35.5 a14 11.5 0 0 1 28 0 Z"/></g></svg>
<div class="a t" style="left:1836.65px;top:778.69px;font-size:26.12px;line-height:26.12px;letter-spacing:-0.000px;color:#111827;font-weight:400;">Individual</div>
<svg class="a" style="left:2232.0px;top:785.5px;" width="21.0" height="12.0" viewBox="-1 -1 21 12" fill="none"><path d="M0.5 0.5 L9.5 9.5 L18.5 0.5" stroke="#6b7280" stroke-width="2.2" stroke-linecap="round" stroke-linejoin="round"/></svg>
<div class="a t" style="left:2319.30px;top:712.63px;font-size:24.06px;line-height:24.06px;letter-spacing:0.000px;color:#111827;font-weight:400;">Owner</div>
<div class="a" style="left:2320.5px;top:752.0px;width:527.8px;height:79.5px;border:2px solid #d9dae1;border-radius:8px"></div>
<div class="a" style="left:2346px;top:771.8px;width:40px;height:40px;border-radius:50%;overflow:hidden;background:linear-gradient(90deg,#b4b8bb,#d9dbdd 22%,#a0a5a9 38%,#e4e6e7 52%,#a4a9ad 72%,#cfd2d4 88%,#9a9fa3)"><div class="a" style="left:0;top:0;width:40px;height:40px;filter:blur(0.7px)"><div class="a" style="left:3px;top:19px;width:34px;height:30px;border-radius:48% 48% 0 0;background:#f3f4f5"></div><div class="a" style="left:14.5px;top:3px;width:10px;height:15px;border-radius:50%;background:#b58e7b"></div><div class="a" style="left:14.5px;top:2px;width:10px;height:5px;border-radius:50% 50% 20% 20%;background:#6b5446"></div><div class="a" style="left:2px;top:27px;width:3px;height:4px;border-radius:50%;background:#444"></div></div></div>
<div class="a t" style="left:2398.50px;top:779.20px;font-size:25.51px;line-height:25.51px;letter-spacing:0.000px;color:#111827;font-weight:400;">Alfonzo Keener</div>
<div class="a t" style="left:1760.53px;top:864.65px;font-size:23.57px;line-height:23.57px;letter-spacing:-0.000px;color:#111827;font-weight:400;">Timeframe</div>
<div class="a" style="left:1760.2px;top:904.5px;width:526.8px;height:79.2px;border:2px solid #d9dae1;border-radius:8px"></div>
<div class="a t" style="left:1785.66px;top:930.98px;font-size:26.84px;line-height:26.84px;letter-spacing:0.000px;color:#111827;font-weight:400;">Q4-2025</div>
<svg class="a" style="left:2232.0px;top:938.0px;" width="21.0" height="12.0" viewBox="-1 -1 21 12" fill="none"><path d="M0.5 0.5 L9.5 9.5 L18.5 0.5" stroke="#6b7280" stroke-width="2.2" stroke-linecap="round" stroke-linejoin="round"/></svg>
<div class="a t" style="left:2319.22px;top:862.89px;font-size:25.65px;line-height:25.65px;letter-spacing:0.000px;color:#111827;font-weight:400;">Start and end date</div>
<div class="a" style="left:2320.5px;top:904.5px;width:527.8px;height:79.2px;border:2px solid #d9dae1;border-radius:8px"></div>
<div class="a t" style="left:2335.60px;top:930.42px;font-size:27.50px;line-height:27.50px;letter-spacing:0.000px;color:#111827;font-weight:400;">1 Oct 2025 - 31 Dec 2025</div>
<div class="a t" style="left:1759.10px;top:1024.85px;font-size:23.81px;line-height:23.81px;letter-spacing:0.000px;color:#111827;font-weight:400;">Progress metric type</div>
<div class="a" style="left:1760.2px;top:1064.5px;width:526.8px;height:79.0px;border:2px solid #d9dae1;border-radius:8px"></div>
<div class="a t" style="left:1784.93px;top:1090.82px;font-size:25.85px;line-height:25.85px;letter-spacing:0.000px;color:#111827;font-weight:400;">Percentage</div>
<svg class="a" style="left:2232.0px;top:1098.0px;" width="21.0" height="12.0" viewBox="-1 -1 21 12" fill="none"><path d="M0.5 0.5 L9.5 9.5 L18.5 0.5" stroke="#6b7280" stroke-width="2.2" stroke-linecap="round" stroke-linejoin="round"/></svg>
<div class="a t" style="left:2320.03px;top:1025.00px;font-size:23.62px;line-height:23.62px;letter-spacing:0.000px;color:#111827;font-weight:400;">Target is to</div>
<div class="a t" style="left:2441.66px;top:1023.01px;font-size:25.97px;line-height:25.97px;letter-spacing:0.000px;color:#4f45a8;font-weight:400;">Increase from</div>
<svg class="a" style="left:2613.0px;top:1032.0px;" width="21.0" height="12.0" viewBox="-1 -1 21 12" fill="none"><path d="M0.5 0.5 L9.5 9.5 L18.5 0.5" stroke="#4f45a8" stroke-width="2.2" stroke-linecap="round" stroke-linejoin="round"/></svg>
<div class="a" style="left:2320.5px;top:1064.5px;width:527.8px;height:79.0px;border:2px solid #d9dae1;border-radius:8px"></div>
<div class="a t" style="left:2345.85px;top:1088.45px;font-size:28.64px;line-height:28.64px;letter-spacing:0.000px;color:#111827;font-weight:400;">0</div>
<div class="a" style="left:2557.0px;top:1080.0px;width:54.0px;height:48.0px;background:#f1f2f4;border-radius:6px"></div>
<div class="a t" style="left:2572.98px;top:1093.39px;font-size:20.81px;line-height:20.81px;letter-spacing:0.000px;color:#6b7280;font-weight:400;">To</div>
<div class="a t" style="left:2780.01px;top:1091.67px;font-size:24.84px;line-height:24.84px;letter-spacing:0.000px;color:#111827;font-weight:400;">100</div>
<div class="a t" style="left:1758.93px;top:1166.82px;font-size:25.85px;line-height:25.85px;letter-spacing:0.000px;color:#4f45a8;font-weight:400;">Percentage</div>
<svg class="a" style="left:1905.0px;top:1176.0px;" width="20.0" height="12.0" viewBox="-1 -1 20 12" fill="none"><path d="M0.5 0.5 L9.0 9.5 L17.5 0.5" stroke="#4f45a8" stroke-width="2.2" stroke-linecap="round" stroke-linejoin="round"/></svg>
<svg class="a" style="left:1770.0px;top:1233.0px;" width="20.0" height="28.0" viewBox="0 0 20 28" fill="none"><path d="M5 3 L15 13.5 L5 24" stroke="#7b818d" stroke-width="2.2" fill="none" stroke-linecap="round" stroke-linejoin="round"/></svg>
<div class="a t" style="left:1806.77px;top:1230.62px;font-size:26.21px;line-height:26.21px;letter-spacing:0.000px;color:#0b0f17;font-weight:400;-webkit-text-stroke:0.58px #0b0f17;">More details</div>
<div class="a" style="left:1711.7px;top:1315.0px;width:1136.0px;height:2.0px;background:#e8e9ec"></div>
<svg class="a" style="left:1721.0px;top:1353.0px;" width="20.0" height="28.0" viewBox="0 0 20 28" fill="none"><path d="M5 3 L15 13.5 L5 24" stroke="#7b818d" stroke-width="2.2" fill="none" stroke-linecap="round" stroke-linejoin="round"/></svg>
<div class="a t" style="left:1768.50px;top:1351.57px;font-size:28.27px;line-height:28.27px;letter-spacing:0.000px;color:#111827;font-weight:400;-webkit-text-stroke:0.34px #111827;">Alignment</div>
<div class="a" style="left:1680.0px;top:1494.0px;width:1200.0px;height:2.0px;background:#e6e7eb"></div>
<div class="a" style="left:2479.0px;top:1528.0px;width:196.0px;height:63.0px;border:2px solid #d9dae1;border-radius:7px"></div>
<div class="a t" style="left:2501.73px;top:1548.16px;font-size:25.45px;line-height:25.45px;letter-spacing:0.000px;color:#111827;font-weight:400;">Save as draft</div>
<div class="a" style="left:2708.0px;top:1528.0px;width:132.0px;height:63.0px;background:#5546a8;border-radius:7px"></div>
<div class="a t" style="left:2730.50px;top:1547.49px;font-size:26.24px;line-height:26.24px;letter-spacing:0.000px;color:#ffffff;font-weight:400;-webkit-text-stroke:0.26px #ffffff;">Publish</div>
</body></html>
